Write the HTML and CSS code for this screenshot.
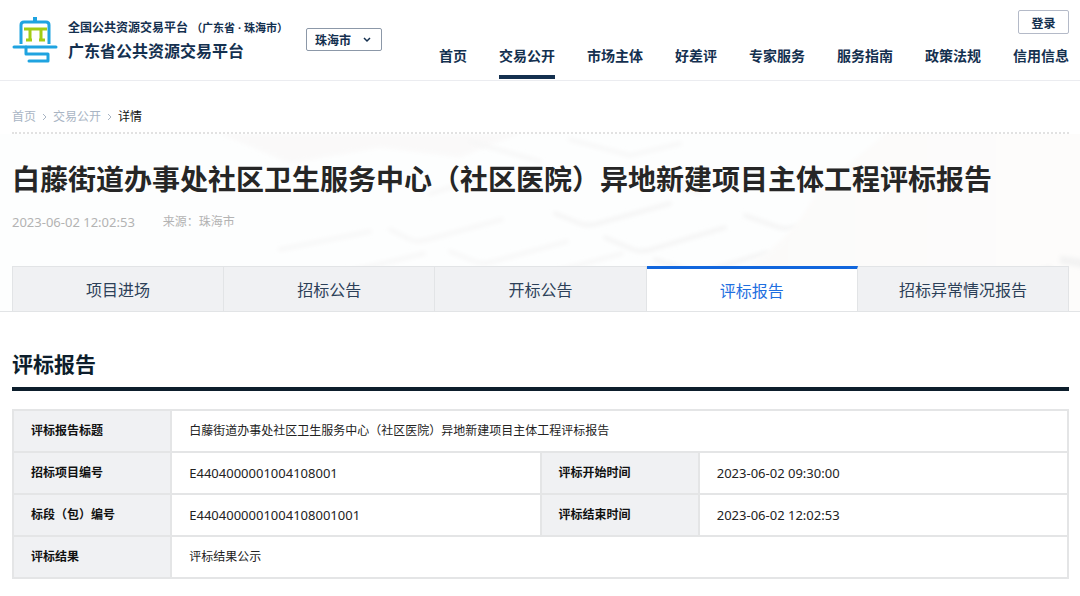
FILE: index.html
```html
<!DOCTYPE html>
<html lang="zh-CN">
<head>
    <meta charset="UTF-8">
    <meta name="viewport" content="width=device-width, initial-scale=1.0">
    <title>广东省公共资源交易平台</title>
    <link rel="stylesheet" href="styles.css">
</head>
<body>
    <header class="header">
        <a class="logo" href="#">
            <svg class="logo-icon" viewBox="0 0 46 48" fill="none" stroke-width="3">
                <path stroke="#1fa3e0" stroke-width="4" d="M23 1v6"/>
                <path stroke="#1fa3e0" stroke-linejoin="round" d="M9 28V9q0-3 3-3h22q3 0 3 3v19"/>
                <path stroke="#1fa3e0" stroke-linecap="round" d="M2 31h42"/>
                <path stroke="#1fa3e0" stroke-linejoin="round" stroke-linecap="round" d="M14 31v7h22v7H17"/>
                <path stroke="#a3cc14" d="M12 13h23M18 13v11M29 13v11M14 24h6M27 24h6"/>
            </svg>
            <span class="logo-text">
                <span class="logo-top">全国公共资源交易平台 <small>（广东省 · 珠海市）</small></span>
                <span class="logo-name">广东省公共资源交易平台</span>
            </span>
        </a>
        <div class="city">
            <select class="city-select" aria-label="城市">
                <option>珠海市</option>
            </select>
            <svg class="city-arrow" viewBox="0 0 8 6" fill="none" stroke="#14304f" stroke-width="1.5"><path d="M1 1l3 3 3-3"/></svg>
        </div>
        <div class="header-right">
            <button class="login-btn" type="button">登录</button>
            <nav class="nav">
                <a href="#">首页</a>
                <a class="active" href="#">交易公开</a>
                <a href="#">市场主体</a>
                <a href="#">好差评</a>
                <a href="#">专家服务</a>
                <a href="#">服务指南</a>
                <a href="#">政策法规</a>
                <a href="#">信用信息</a>
            </nav>
        </div>
    </header>

    <section class="banner">
        <!-- faded keyboard and hand -->
        <svg class="banner-bg" viewBox="0 0 1080 178" preserveAspectRatio="xMidYMid slice" aria-hidden="true">
            <defs>
                <filter id="soft" x="-10%" y="-20%" width="120%" height="140%"><feGaussianBlur stdDeviation="2"/></filter>
                <linearGradient id="hand" x1="0" x2="1">
                    <stop offset="0" stop-color="#fbfaf9"/>
                    <stop offset="1" stop-color="#fefdfc"/>
                </linearGradient>
            </defs>
            <rect width="1080" height="178" fill="#fdfefe"/>
            <path fill="#faf9f9" filter="url(#soft)" d="M220 0h300l-60 24-80-10-90 16z"/>
            <g filter="url(#soft)" fill="none" stroke="#f4f4f4" stroke-width="4" stroke-linecap="round">
                <path d="M555 80l25 10q8 3 18 0l72-20"/>
                <path d="M605 104l28 12q8 3 18 0l74-22"/>
                <path d="M655 126l34 11q8 3 18 0l60-18"/>
                <path d="M745 82l34 12q8 2 16-1"/>
                <path stroke="#f7f7f7" d="M450 118l25 10q8 3 18 0l74-20M540 142l82-22M390 96l20 10q8 3 18 0l74-20M280 116l90-18M340 140l84-20M470 8l70 20M570 6l60 16 50-12M640 40l60 20M430 60l60-18"/>
            </g>
            <path fill="url(#hand)" filter="url(#soft)" d="M735 140q60-34 80-80Q860 20 910-20h240v220H735z"/>
            <path fill="#f3f3f3" filter="url(#soft)" d="M1060 122l40 6v10l-40-8zM1030 138l20-6 6 8-20 6z"/>
        </svg>
        <div class="banner-inner">
            <div class="breadcrumb">
                <a href="#">首页</a>
                <svg viewBox="0 0 5 8"><path d="M1 1l3 3-3 3"/></svg>
                <a href="#">交易公开</a>
                <svg viewBox="0 0 5 8"><path d="M1 1l3 3-3 3"/></svg>
                <span class="current">详情</span>
            </div>
            <h1 class="title">白藤街道办事处社区卫生服务中心（社区医院）异地新建项目主体工程评标报告</h1>
            <div class="meta">
                <time class="num">2023-06-02 12:02:53</time>
                <span>来源：珠海市</span>
            </div>
            <div class="tabs">
                <a href="#">项目进场</a>
                <a href="#">招标公告</a>
                <a href="#">开标公告</a>
                <a class="active" href="#">评标报告</a>
                <a href="#">招标异常情况报告</a>
            </div>
        </div>
    </section>

    <main class="content">
        <h2 class="section-title">评标报告</h2>
        <table class="info">
            <colgroup>
                <col class="col-label"><col class="col-value"><col class="col-label"><col class="col-value">
            </colgroup>
            <tr>
                <th scope="row">评标报告标题</th>
                <td colspan="3">白藤街道办事处社区卫生服务中心（社区医院）异地新建项目主体工程评标报告</td>
            </tr>
            <tr>
                <th scope="row">招标项目编号</th>
                <td class="num">E4404000001004108001</td>
                <th scope="row">评标开始时间</th>
                <td class="num">2023-06-02 09:30:00</td>
            </tr>
            <tr>
                <th scope="row">标段（包）编号</th>
                <td class="num">E4404000001004108001001</td>
                <th scope="row">评标结束时间</th>
                <td class="num">2023-06-02 12:02:53</td>
            </tr>
            <tr>
                <th scope="row">评标结果</th>
                <td colspan="3">评标结果公示</td>
            </tr>
        </table>
    </main>
</body>
</html>
```

FILE: styles.css
```css
* {
    margin: 0;
    padding: 0;
    box-sizing: border-box;
}

body {
    background: #fff;
    color: #222;
    font-family: "Noto Sans", "Noto Sans CJK SC", sans-serif;
    font-size: 12px;
    line-height: 20px;
}

a {
    color: inherit;
    text-decoration: none;
}

.num {
    font-size: 13px;
}

/* Header */
.header {
    display: flex;
    align-items: flex-start;
    height: 81px;
    padding: 0 11px 0 12px;
    border-bottom: 1px solid #ebecf0;
    color: #14304f;
}

.logo {
    display: flex;
    gap: 10px;
    padding-top: 16px;
}

.logo-icon {
    width: 46px;
    height: 48px;
}

.logo-text {
    display: flex;
    flex-direction: column;
    font-weight: bold;
    white-space: nowrap;
}

.logo-top {
    line-height: 24px;
}

.logo-top small {
    font-size: 11px;
}

.logo-name {
    font-size: 16px;
    line-height: 22px;
}

.city {
    position: relative;
    margin: 28px 0 0 18px;
}

.city-select {
    appearance: none;
    display: block;
    width: 76px;
    height: 23px;
    padding-left: 8px;
    border: 1px solid #8c98a8;
    border-radius: 2px;
    background: #fff;
    color: inherit;
    font: bold 12px "Noto Sans CJK SC", sans-serif;
}

.city-arrow {
    position: absolute;
    top: 9px;
    right: 11px;
    width: 8px;
    height: 6px;
    pointer-events: none;
}

.header-right {
    display: flex;
    flex-direction: column;
    align-items: flex-end;
    margin-left: auto;
    padding-top: 10px;
}

.login-btn {
    width: 51px;
    height: 24px;
    border: 1px solid #b4bac8;
    border-radius: 2px;
    background: #fff;
    color: inherit;
    font: bold 12px "Noto Sans CJK SC", sans-serif;
}

.nav {
    display: flex;
    gap: 32px;
    padding-top: 8px;
    font-size: 14px;
    font-weight: bold;
    line-height: 28px;
    white-space: nowrap;
}

.nav a {
    height: 37px;
}

.nav .active {
    border-bottom: 4px solid #14304f;
}

/* Banner */
.banner {
    position: relative;
    border-bottom: 1px solid #e2e4e6;
}

.banner-bg {
    position: absolute;
    top: 53px;
    left: 0;
    width: 100%;
    height: calc(100% - 53px);
}

.banner-inner {
    position: relative;
    padding: 0 11px 0 12px;
}

.breadcrumb {
    display: flex;
    align-items: center;
    gap: 6px;
    height: 53px;
    padding-top: 20px;
    border-bottom: 2px dotted #e2e2e2;
    color: #a9b5c4;
}

.breadcrumb svg {
    width: 5px;
    height: 8px;
    fill: none;
    stroke: #a9b5c4;
}

.breadcrumb .current {
    color: #111;
}

.title {
    padding-top: 24px;
    color: #262626;
    font-family: "Noto Sans CJK SC", sans-serif;
    font-size: 28px;
    line-height: 40px;
}

.meta {
    display: flex;
    align-items: center;
    gap: 28px;
    padding: 14px 0 34px;
    color: #b3b3b3;
}

.tabs {
    display: flex;
    height: 45px;
    border-left: 1px solid #e2e4e6;
    color: #2c4058;
    font-size: 16px;
    line-height: 46px;
    text-align: center;
}

.tabs a {
    flex: 1;
    border-top: 1px solid #e2e4e6;
    border-right: 1px solid #e2e4e6;
    background: #f0f1f3;
}

.tabs .active {
    border-top: 3px solid #1166dd;
    background: #fff;
    color: #1f6fe0;
    line-height: 44px;
}

/* Content */
.content {
    padding: 31px 11px 16px 12px;
}

.section-title {
    padding-bottom: 4px;
    border-bottom: 4px solid #0d1e2c;
    color: #0d1e2c;
    font-family: "Noto Sans CJK SC", sans-serif;
    font-size: 21px;
    line-height: 40px;
}

.info {
    width: 100%;
    margin-top: 18px;
    border-collapse: collapse;
    table-layout: fixed;
}

.col-label {
    width: 15%;
}

.col-value {
    width: 35%;
}

.info th,
.info td {
    height: 42px;
    padding: 0 17px;
    border: 2px solid #e4e5e6;
    text-align: left;
}

.info th {
    background: #f0f1f3;
    color: #111;
}
```
